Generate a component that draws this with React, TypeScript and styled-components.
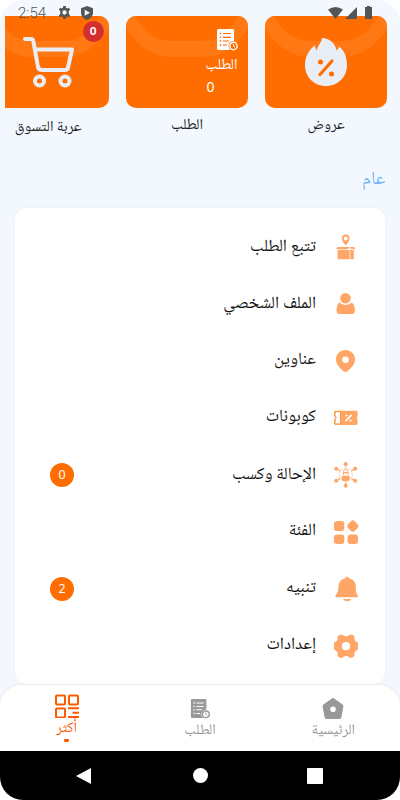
import React from 'react';
import styled, { createGlobalStyle } from 'styled-components';

const Global = createGlobalStyle`
  * { box-sizing: border-box; }
  body { margin: 0; background: #fff; font-family: "Noto Naskh Arabic", "Noto Naskh Arabic UI", "Noto Sans", "DejaVu Sans", sans-serif; }
`;

const Screen = styled.div`
  direction: rtl;
  position: relative;
  width: 400px;
  height: 800px;
  display: flex;
  flex-direction: column;
  overflow: hidden;
  border-radius: 23px;
  background: #f3f8ff;
`;

const StatusBar = styled.div`
  direction: ltr;
  position: absolute;
  inset: 0 0 auto 0;
  z-index: 2;
  height: 24px;
  padding: 1px 28px 0 18px;
  display: flex;
  align-items: center;
  color: #555;
`;
const Clock = styled.span`
  font: 300 15px/20px Roboto, sans-serif;
  width: 28px;
  padding-top: 1px;
  margin-right: 12px;
`;
const StatusSpacer = styled.span`flex: 1;`;
const StatusIcon = styled.svg<{ $gap: number }>`
  flex: none;
  margin-right: ${p => p.$gap}px;
`;

const Cards = styled.div`
  display: flex;
  gap: 17px;
  margin: 16px 0 0 5px;
  padding-right: 13.5px;
  height: 124px;
  overflow: hidden;
`;
const CardColumn = styled.div`
  flex: none;
  width: 122px;
  display: flex;
  flex-direction: column;
  align-items: center;
`;
const Card = styled.div`
  position: relative;
  width: 122px;
  height: 92px;
  border-radius: 10px;
  overflow: hidden;
  background: #ff6d00;
`;
const Layer = styled.svg`
  position: absolute;
  inset: 0;
`;
const CardBadge = styled.span`
  position: absolute;
  top: 5px;
  right: 5px;
  width: 21px;
  height: 21px;
  border-radius: 50%;
  background: #d32f2f;
  color: #fff;
  text-align: center;
  font: 700 10px/21px Inter, sans-serif;
`;
const OrderInfo = styled.div`
  position: relative;
  padding: 13px 10px 0 0;
  display: flex;
  flex-direction: column;
  align-items: flex-start;
  color: #fff;
  font-size: 15px;
  line-height: 24px;
`;
const OrderCount = styled.span`
  font-family: "Noto Sans", sans-serif;
  font-size: 14px;
  line-height: 18px;
  margin-right: 23px;
`;
const Label = styled.span<{ $shift?: number }>`
  display: inline-block;
  white-space: nowrap;
  margin-top: ${p => p.$shift ?? 0}px;
`;
const Caption = styled.div<{ $shift?: number }>`
  margin-top: 6px;
  padding: ${p => p.$shift ?? 0}px 0 0 1px;
  font-size: 15px;
  line-height: 24px;
  color: #222;
`;

const Heading = styled.h2`
  margin: 28px 15px 0;
  height: 24px;
  font-size: 18.5px;
  line-height: 24px;
  font-weight: 400;
  color: #6cb2f5;
`;

const Menu = styled.div`
  margin: 16px 15px 0;
  padding: 10px 27px 10px 35px;
  height: 476px;
  flex: none;
  border-radius: 12px;
  background: #fff;
  box-shadow: 0 0 3px rgba(60, 100, 160, 0.06);
`;
const MenuRow = styled.div`
  height: 57px;
  display: flex;
  align-items: center;
  gap: 18px;
  color: #111;
  font-size: 17.2px;
  line-height: 24px;
`;
const MenuIcon = styled.svg`
  flex: none;
  width: 24px;
  height: 24px;
  color: #ffa666;
  fill: currentColor;
`;
const Count = styled.span`
  margin-right: auto;
  width: 24px;
  height: 24px;
  border-radius: 50%;
  background: #ff6d00;
  color: #fff;
  text-align: center;
  font: 400 12.5px/24px "Noto Sans", sans-serif;
`;

const TabBar = styled.nav`
  flex: none;
  margin-top: 1px;
  height: 66px;
  display: grid;
  grid-template-columns: repeat(3, 1fr);
  border-radius: 22px 22px 0 0;
  background: #fff;
  box-shadow: 0 0 4px rgba(255, 109, 0, 0.15);
`;
const Tab = styled.div<{ $active?: boolean }>`
  display: flex;
  flex-direction: column;
  align-items: center;
  padding-top: ${p => (p.$active ? 9 : 11)}px;
  color: ${p => (p.$active ? '#ff5a00' : '#999')};
  font-size: 14.7px;
  line-height: 20px;
`;
const Dot = styled.span`
  width: 5px;
  height: 3px;
  border-radius: 1px;
  background: currentColor;
`;
const SystemBar = styled.div`
  direction: ltr;
  flex: 1;
  display: grid;
  grid-template-columns: 167px 66px 164px;
  place-items: center;
  background: #000;
`;

const Arc = () => (
  <Layer width="122" height="92" viewBox="0 0 122 92">
    <path d="M0 0H9C19 17 30 25 44 25H78C92 25 103 17 113 0H122V13C109 32 93 41 78 41H44C29 41 13 32 0 13Z" fill="#ff7814" />
  </Layer>
);

const OrderIcon = ({ knock }: { knock: string }) => (
  <svg width="22" height="22" viewBox="0 0 22 22">
    <rect x="1" y="0" width="17" height="21" rx="1.5" fill="currentColor" />
    <path d="M7 4.5H15M7 8.3H15M7 12H13M7 16H11" stroke={knock} strokeWidth="1.2" />
    <path d="M3.8 4.5H5.3M3.8 8.3H5.3M3.8 12H5.3M3.8 16H5.3" stroke={knock} strokeWidth="1.4" />
    <circle cx="17.5" cy="17" r="5" fill={knock} />
    <circle cx="17.5" cy="17" r="4.4" fill="currentColor" />
    <circle cx="17.5" cy="17" r="2.9" fill={knock} />
    <path d="M17.5 15V17.3L19 18" stroke="currentColor" strokeWidth="1" fill="none" />
  </svg>
);

const gear = 'M10 1.8Q12 2.8 14 1.8L15.5 .9Q17 0 18.5 .9L19.6 1.6Q20.8 2.5 20.4 4.4 20.1 6.5 21.8 7.3 24 8.2 24 9.8V14.6Q24 16.2 21.8 17.1 20.1 17.9 20.4 20 20.8 21.9 19.6 22.8L18.5 23.5Q17 24.4 15.5 23.5L14 22.6Q12 21.6 10 22.6L8.5 23.5Q7 24.4 5.5 23.5L4.4 22.8Q3.2 21.9 3.6 20 3.9 17.9 2.2 17.1 0 16.2 0 14.6V9.8Q0 8.2 2.2 7.3 3.9 6.5 3.6 4.4 3.2 2.5 4.4 1.6L5.5 .9Q7 0 8.5 .9ZM12 8.1A4.1 4.1 0 1 0 12 16.3 4.1 4.1 0 1 0 12 8.1Z';
const cog = 'M9.8 0H14.2L14.8 3.2 17 4.5 20.2 3.3 22.4 7.1 19.9 9.3V14.7L22.4 16.9 20.2 20.7 17 19.5 14.8 20.8 14.2 24H9.8L9.2 20.8 7 19.5 3.8 20.7 1.6 16.9 4.1 14.7V9.3L1.6 7.1 3.8 3.3 7 4.5 9.2 3.2ZM12 8A4 4 0 1 0 12 16 4 4 0 1 0 12 8Z';

const icons: Record<string, React.ReactNode> = {
  track: (
    <>
      <path fillRule="evenodd" d="M11.7-.5C9.2-.5 7.8 1.2 7.8 3.4 7.8 6.2 11.7 10.4 11.7 10.4S15.6 6.2 15.6 3.4C15.6 1.2 14.2-.5 11.7-.5ZM11.7 1.5A2.1 2.1 0 1 1 11.7 5.7 2.1 2.1 0 1 1 11.7 1.5Z" />
      <path d="M3.3 12H20L21.3 14.2H2.2ZM3.6 14.9H19.8V24.2H3.6Z" />
      <path d="M15.8 12.5V24M12.8 14.6 15.8 12.5 18.5 15.2" fill="none" stroke="#fff" strokeWidth=".7" />
    </>
  ),
  profile: (
    <>
      <circle cx="11.5" cy="6.2" r="5.3" />
      <path d="M5.3 10.6Q8 13 11.5 13T17.7 10.6Q20.9 13 20.9 18.4 20.9 22 17 22H6Q2.5 22 2.5 18.4 2.5 13 5.3 10.6Z" />
    </>
  ),
  pin: <path fillRule="evenodd" d="M11.5 1C6.3 1 2 5.1 2 10.2 2 15.2 5.8 19 9.5 22.2Q11.5 23.7 13.5 22.2C17.2 19 21 15.2 21 10.2 21 5.1 16.7 1 11.5 1ZM11.5 7.4A3.3 3.3 0 1 1 11.5 14 3.3 3.3 0 1 1 11.5 7.4Z" />,
  coupon: (
    <>
      <path d="M1.5 4.8H22Q23.6 4.8 23.6 6.5V10Q21.8 12 23.6 14V17.3Q23.6 19 22 19H1.5Q0 19 0 17.3V14Q2 12 0 10V6.5Q0 4.8 1.5 4.8Z" />
      <path d="M1.5 6.2H6V17.7H1.5V14.9Q3.7 12 1.5 9.1Z" fill="#fff" />
      <path d="M.7 14V18H6.5V5.5H.7V10" fill="none" stroke="#ff9d35" strokeWidth="1" />
      <path d="M11.5 15.2 17.5 8.8M11.6 9.5H13.5M15.5 14.7H17.4" fill="none" stroke="#fff" strokeWidth="1.7" />
    </>
  ),
  refer: (
    <>
      <circle cx="11.7" cy="11.8" r="6.6" fill="none" stroke="currentColor" strokeWidth=".7" strokeOpacity=".6" />
      <path d="M11.7 1V4.5M11.7 19V23M2.5 5.7 6 8M2.5 18 6 15.5M20.8 5.7 17.4 8M20.8 18 17.4 15.5" stroke="currentColor" strokeWidth="1.1" />
      {[[11.7, 1], [11.7, 22.7], [2.2, 5.7], [21.2, 5.7], [2.2, 17.7], [21.2, 17.7]].map(([x, y]) => <circle key={`${x}-${y}`} cx={x} cy={y} r="2" />)}
      <path d="M9.5 12V8.4Q9.5 6.5 11.7 6.5T13.9 8.4V12" fill="none" stroke="currentColor" strokeWidth=".9" />
      <path d="M9.5 9H14V10.3H9.5ZM7.7 12.7H15.7V17Q14 18.3 11.7 18.3T7.7 17Z" />
    </>
  ),
  category: (
    <>
      <rect x="0" y="1" width="10.3" height="10" rx="3" />
      <rect x="0" y="14.4" width="10.3" height="9.6" rx="3" />
      <rect x="13.6" y="14.4" width="10.4" height="9.6" rx="3" />
      <rect x="14.1" y="1.4" width="9.4" height="9.4" rx="2.6" transform="rotate(45 18.8 6.1)" />
    </>
  ),
  bell: <path d="M13.2-.2Q11.5-.2 10.8 1.4 4.7 3 4.5 9.5C4.3 14 3.5 16 1.7 18.2Q.7 20 2 20.2H23.2Q24.7 20 23.7 18.2C22 16 21.9 14 21.8 9.5Q21.5 3 15.5 1.4 14.8-.2 13.2-.2ZM9 22H17.5Q16 24.2 13.2 24.2T9 22Z" />,
  settings: <path fillRule="evenodd" d={gear} />,
};

const rows: { icon: string; label: string; count?: string; shift?: number }[] = [
  { icon: 'track', label: 'تتبع الطلب', shift: 3 },
  { icon: 'profile', label: 'الملف الشخصي', shift: 3 },
  { icon: 'pin', label: 'عناوين' },
  { icon: 'coupon', label: 'كوبونات' },
  { icon: 'refer', label: 'الإحالة وكسب', count: '0', shift: 3 },
  { icon: 'category', label: 'الفئة' },
  { icon: 'bell', label: 'تنبيه', count: '2' },
  { icon: 'settings', label: 'إعدادات' },
];

export default function App() {
  return (
    <>
      <Global />
      <Screen>
        <StatusBar>
          <Clock>2:54</Clock>
          <StatusIcon $gap={10} width="13" height="13" viewBox="0 0 24 24" fill="currentColor"><path fillRule="evenodd" d={cog} /></StatusIcon>
          <StatusIcon $gap={0} width="12" height="14" viewBox="0 0 12 14">
            <path fillRule="evenodd" fill="currentColor" d="M6 0 12 2.2V7Q12 11.5 6 14 0 11.5 0 7V2.2ZM3.7 3.8V9.8L9 6.8Z" />
          </StatusIcon>
          <StatusSpacer />
          <StatusIcon $gap={2} width="15" height="12" viewBox="0 0 15 12" fill="currentColor"><path d="M0 2.5Q7.5-2.5 15 2.5L7.5 12Z" /></StatusIcon>
          <StatusIcon $gap={8} width="12" height="12" viewBox="0 0 12 12" fill="currentColor"><path d="M12 0V12H0Z" /></StatusIcon>
          <StatusIcon $gap={0} width="7" height="13" viewBox="0 0 7 13" fill="currentColor"><path d="M2 0H5V1H7V13H0V1H2Z" /></StatusIcon>
        </StatusBar>

        <Cards>
          <CardColumn>
            <Card>
              <Arc />
              <Layer width="122" height="92" viewBox="0 0 122 92">
                <path fill="#e9eef6" d="M57 22C64 22 70.5 27 71.5 34.5Q73.5 33 74 30.5C79 34 82 41 82 49 82 61 73 70 61 70S40 61 40 49C40 41 44 34 49.5 29.5L51.5 34.5Q53 29.5 55 27.5 56.5 25 57 22Z" />
                <path d="M55 58.5 67 45" stroke="#ff6d00" strokeWidth="3.2" strokeLinecap="round" />
                <circle cx="55.5" cy="46" r="2.5" fill="#ff6d00" />
                <circle cx="66.5" cy="58" r="2.5" fill="#ff6d00" />
              </Layer>
            </Card>
            <Caption><Label>عروض</Label></Caption>
          </CardColumn>
          <CardColumn>
            <Card>
              <Arc />
              <OrderInfo>
                <OrderIcon knock="#ff6d00" />
                <Label $shift={3}>الطلب</Label>
                <OrderCount>0</OrderCount>
              </OrderInfo>
            </Card>
            <Caption><Label>الطلب</Label></Caption>
          </CardColumn>
          <CardColumn>
            <Card>
              <Arc />
              <Layer width="122" height="92" viewBox="0 0 122 92" fill="none" stroke="#e9eef6" strokeWidth="4" strokeLinejoin="round" strokeLinecap="round">
                <path d="M38 23H44Q46 23 46.3 25L51 51Q51.7 54 55 54H78Q80.5 54 81 51.5L85 33.5H48.5" />
                <circle cx="52.5" cy="65" r="4.5" />
                <circle cx="78" cy="65" r="4.5" />
              </Layer>
              <CardBadge>0</CardBadge>
            </Card>
            <Caption $shift={2}><Label>عربة التسوق</Label></Caption>
          </CardColumn>
        </Cards>

        <Heading>عام</Heading>

        <Menu>
          {rows.map(r => (
            <MenuRow key={r.icon}>
              <MenuIcon viewBox="0 0 24 24" overflow="visible">{icons[r.icon]}</MenuIcon>
              <Label $shift={r.shift}>{r.label}</Label>
              {r.count && <Count>{r.count}</Count>}
            </MenuRow>
          ))}
        </Menu>

        <TabBar>
          <Tab>
            <svg width="22" height="24" viewBox="0 0 22 24"><path fill="#999" fillRule="evenodd" d="M9.5 2.7Q11 1.5 12.5 2.7L20.3 8.3Q21.7 9.4 21.3 11L19.5 21Q19.2 23 17.2 23H4.8Q2.8 23 2.5 21L.7 11Q.3 9.4 1.7 8.3ZM11 10.5A2.8 2.8 0 1 0 11 16.1 2.8 2.8 0 1 0 11 10.5Z" /></svg>
            <Label $shift={1}>الرئيسية</Label>
          </Tab>
          <Tab>
            <svg width="20" height="24" viewBox="0 -3 22 26"><OrderIcon knock="#fff" /></svg>
            <Label $shift={1}>الطلب</Label>
          </Tab>
          <Tab $active>
            <svg width="24" height="24" viewBox="0 0 24 24" fill="none" stroke="currentColor" strokeWidth="2">
              <rect x="1" y="1.5" width="9" height="9" rx="1" />
              <rect x="14" y="1.5" width="9" height="9" rx="1" />
              <rect x="1" y="14.5" width="9" height="9" rx="1" />
              <path d="M13 14.2H24M17.5 18.7H24M13 23H24" />
            </svg>
            <Label $shift={1}>أكثر</Label>
            <Dot />
          </Tab>
        </TabBar>

        <SystemBar>
          <svg width="15" height="18" viewBox="0 0 15 18" fill="#fff"><path d="M15 1V17L0 9Z" /></svg>
          <svg width="15" height="15" viewBox="0 0 15 15" fill="#fff"><circle cx="7.5" cy="7.5" r="7.5" /></svg>
          <svg width="16" height="16" viewBox="0 0 16 16" fill="#fff"><rect width="16" height="16" rx="1" /></svg>
        </SystemBar>
      </Screen>
    </>
  );
}
